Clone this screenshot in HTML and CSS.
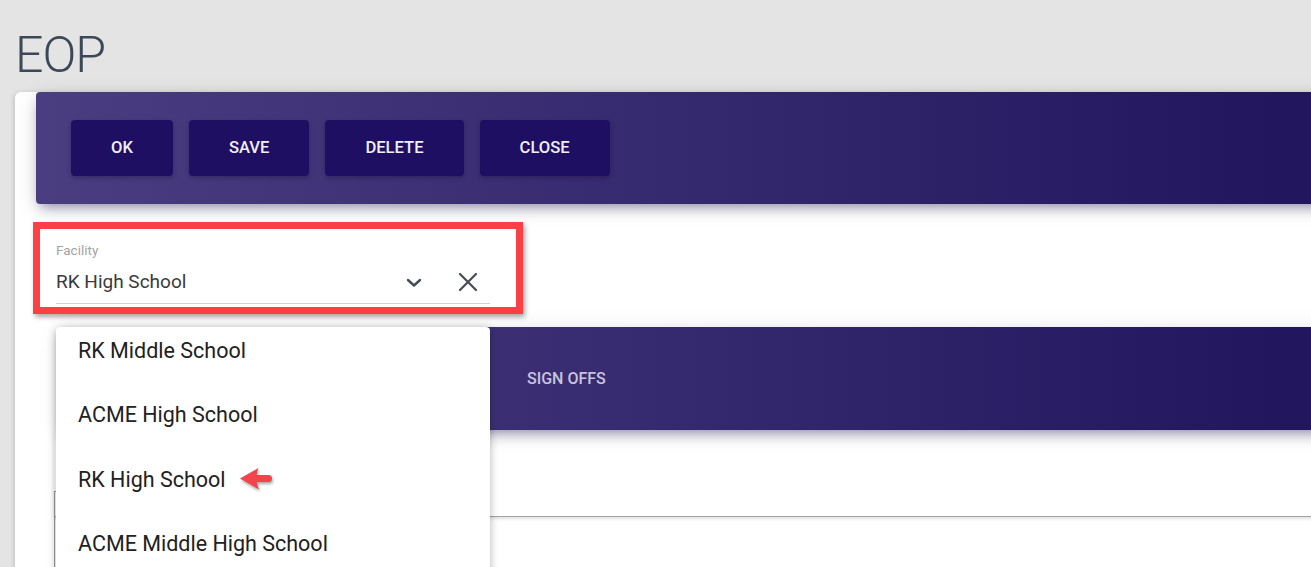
FILE: index.html
```html
<!DOCTYPE html>
<html lang="en">
<head>
<meta charset="utf-8">
<title>EOP</title>
<link rel="stylesheet" href="styles.css">
</head>
<body>
  <h1 class="page-title">EOP</h1>
  <div class="card">
    <div class="card-header">
      <button class="btn">OK</button>
      <button class="btn">Save</button>
      <button class="btn">Delete</button>
      <button class="btn">Close</button>
    </div>
    <div class="card-body">
      <div class="field">
        <div class="field-label">Facility</div>
        <div class="select-row">
          <span class="select-value">RK High School</span>
          <svg class="icon-chevron" width="16" height="10" viewBox="0 0 16 10"><path d="M2 2 L8 7.5 L14 2" fill="none" stroke="#464c54" stroke-width="2.4" stroke-linecap="round" stroke-linejoin="round"/></svg>
          <svg class="icon-close" width="20" height="20" viewBox="0 0 20 20"><path d="M2 2 L18 18 M18 2 L2 18" fill="none" stroke="#464c54" stroke-width="2.2" stroke-linecap="round"/></svg>
        </div>
        <div class="highlight"></div>
        <div class="dropdown">
          <ul class="options">
            <li class="option">RK Middle School</li>
            <li class="option">ACME High School</li>
            <li class="option">RK High School
              <svg class="pointer" width="36" height="26" viewBox="0 0 36 26"><path d="M1 12.5 L19.5 2 Q17.6 6.5 17.8 9 L29.5 9 Q33 9 33 12.6 Q33 16 29.5 16 L17.8 16 Q17.8 19 20 23.5 Z" fill="#f4434b"/></svg>
            </li>
            <li class="option">ACME Middle High School</li>
          </ul>
        </div>
      </div>
      <div class="tabs-card">
        <div class="tabs-bar">
          <span class="tab">Sign Offs</span>
        </div>
        <div class="tab-strip">
          <div class="tab-edge"></div>
        </div>
      </div>
      <div class="pane"></div>
    </div>
  </div>
</body>
</html>
```
FILE: styles.css
```css
* { box-sizing: border-box; }

html, body {
  height: 100%;
}

body {
  margin: 0;
  background: #e4e4e4;
  font-family: Roboto, "Noto Sans", "Liberation Sans", sans-serif;
  overflow: hidden;
}

.page-title {
  margin: 0;
  padding: 30px 0 0 15px;
  height: 82px;
  font-size: 50px;
  line-height: 50px;
  font-weight: 300;
  letter-spacing: -1px;
  color: #3c4858;
}

.card {
  margin: 50px -120px 0 15px;
  background: #fff;
  border-radius: 6px;
  box-shadow: -1px 1px 5px rgba(0, 0, 0, 0.16);
  min-height: 520px;
}

.card-header {
  margin: -40px 0 0 21px;
  height: 112px;
  padding: 28px 35px;
  display: flex;
  gap: 16px;
  border-radius: 4px;
  background: linear-gradient(90deg, #4a3d80 0, #22165f 1240px);
  box-shadow: 0 4px 20px 0 rgba(0, 0, 0, 0.14), 0 7px 12px -5px rgba(34, 22, 95, 0.45);
}

.btn {
  height: 56px;
  padding: 0 40px 2px;
  border: 0;
  border-radius: 4px;
  background: #1e0f62;
  color: #f1eff8;
  font-family: inherit;
  font-size: 16.6px;
  font-weight: 500;
  text-transform: uppercase;
  box-shadow: 0 2px 4px rgba(10, 0, 40, 0.25);
}

.card-body {
  padding: 0 0 0 39px;
}

.field {
  position: relative;
  margin: 37px 0 0 2px;
  width: 434px;
}

.field-label {
  font-size: 13.5px;
  line-height: 16px;
  color: #a3a3a3;
  padding-top: 1px;
}

.select-row {
  margin-top: 4px;
  height: 42px;
  display: flex;
  align-items: center;
  border-bottom: 1px solid #d0d0d0;
  padding-right: 12px;
}

.select-value {
  flex: 1;
  font-size: 19px;
  color: #3a3a3a;
  margin-top: -3px;
}

.icon-chevron {
  margin-right: 36px;
  margin-top: 0;
}

.icon-close {
  margin-top: -1px;
}

.highlight {
  position: absolute;
  left: -23px;
  top: -19px;
  width: 490px;
  height: 92px;
  border: 7px solid #fc3f45;
  box-shadow: 2px 3px 5px rgba(0, 0, 0, 0.35);
  pointer-events: none;
}

.dropdown {
  position: absolute;
  z-index: 5;
  left: 0;
  top: 86px;
  width: 434px;
  height: 260px;
  background: #fff;
  border-radius: 4px;
  box-shadow: 0 2px 9px rgba(0, 0, 0, 0.3);
  overflow: hidden;
}

.options {
  list-style: none;
  margin: -9px 0 0;
  padding: 0;
}

.option {
  height: 64.5px;
  display: flex;
  align-items: center;
  padding-left: 22px;
  font-size: 21.5px;
  color: #212121;
}

.pointer {
  margin-left: 13px;
  margin-top: -1px;
  filter: drop-shadow(1px 2px 1.5px rgba(0, 0, 0, 0.35));
}

.tabs-card {
  margin-top: 23px;
}

.tabs-bar {
  margin-left: 6px;
  height: 103px;
  display: flex;
  align-items: center;
  padding-left: 467px;
  background: linear-gradient(90deg, #4a3d80 -20px, #22165f 1220px);
  box-shadow: 0 4px 20px 0 rgba(0, 0, 0, 0.14), 0 7px 12px -5px rgba(34, 22, 95, 0.45);
}

.tab {
  font-size: 16px;
  font-weight: 500;
  color: #c9c3de;
  text-transform: uppercase;
}

.tab-strip {
  height: 87px;
  display: flex;
  align-items: flex-end;
  border-bottom: 1px solid #a4a4a4;
  box-shadow: 0 2px 3px rgba(0, 0, 0, 0.12);
}

.tab-edge {
  width: 4px;
  height: 25px;
  border-left: 1px solid #9c9c9c;
  border-top: 1px solid #9c9c9c;
}

.pane {
  height: 60px;
  border-left: 1px solid #9c9c9c;
}
```
